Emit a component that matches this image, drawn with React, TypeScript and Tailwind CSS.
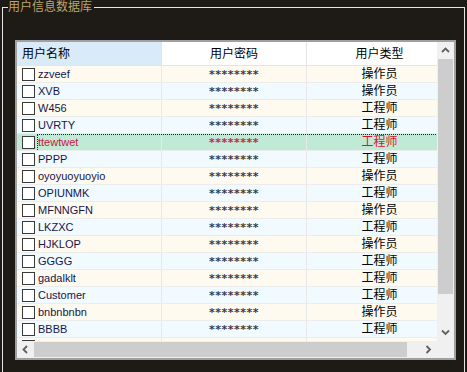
import React from "react";

interface UserRow {
  name: string;
  type: string;
}

const users: UserRow[] = [
  { name: "zzveef", type: "操作员" },
  { name: "XVB", type: "操作员" },
  { name: "W456", type: "工程师" },
  { name: "UVRTY", type: "工程师" },
  { name: "ttewtwet", type: "工程师" },
  { name: "PPPP", type: "工程师" },
  { name: "oyoyuoyuoyio", type: "操作员" },
  { name: "OPIUNMK", type: "工程师" },
  { name: "MFNNGFN", type: "操作员" },
  { name: "LKZXC", type: "工程师" },
  { name: "HJKLOP", type: "操作员" },
  { name: "GGGG", type: "工程师" },
  { name: "gadalklt", type: "工程师" },
  { name: "Customer", type: "工程师" },
  { name: "bnbnbnbn", type: "操作员" },
  { name: "BBBB", type: "工程师" },
  { name: "", type: "" },
];

const SELECTED = 4;

function Arrow({ dir }: { dir: "up" | "down" | "left" | "right" }) {
  // 滚动条上的小箭头
  const pts = {
    up: "1,6 4.5,2.5 8,6",
    down: "1,2.5 4.5,6 8,2.5",
    left: "6,1 2.5,4.5 6,8",
    right: "2.5,1 6,4.5 2.5,8",
  }[dir];
  return (
    <svg width="9" height="9" viewBox="0 0 9 9">
      <polyline points={pts} fill="none" stroke="#606060" strokeWidth="1.8" />
    </svg>
  );
}

export default function App() {
  return (
    <div
      className="h-[372px] w-[467px] overflow-hidden bg-[#1e1a16] px-[2px]"
      style={{ fontFamily: '"Liberation Sans", "Noto Sans CJK SC", sans-serif' }}
    >
      <fieldset className="h-[420px] border border-[#e6e6e6] pl-[5px]">
        <legend className="px-0 pr-[2px] text-[12px] leading-[14px] text-[#bba66c]">用户信息数据库</legend>

        {/* 数据表格 */}
        <div className="ml-[7px] mt-[26px] flex h-[320px] w-[441px] flex-col border-2 border-[#a0a0a0] bg-white">
          <div className="flex h-[299px]">
            <div className="flex-1 overflow-hidden">
              <div className="w-[435px]">
                {/* 表头 */}
                <div className="flex h-[24px] border-b border-[#e4e4e4] text-[12px] text-black">
                  <div className="flex w-[145px] items-center border-r border-[#e4e4e4] bg-[#d9eaf8] pl-[5px]">用户名称</div>
                  <div className="flex w-[145px] items-center justify-center border-r border-[#e4e4e4]">用户密码</div>
                  <div className="flex w-[145px] items-center justify-center">用户类型</div>
                </div>

                {users.map((u, i) => {
                  const selected = i === SELECTED;
                  const bg = selected ? "bg-[#c1ead6]" : i % 2 === 0 ? "bg-[#fffaf0]" : "bg-[#f0faff]";
                  return (
                    <div key={i} className={`relative flex h-[17px] border-b border-[#ececec] ${bg}`}>
                      <div className="flex w-[145px] items-center border-r border-[#e8e8e8] pl-[5px]">
                        <span className="h-[13px] w-[13px] border border-[#3a3a3a] bg-white" />
                        <span
                          className={`ml-[3px] text-[11px] ${selected ? "text-[#c8143c]" : "text-[#16164a]"}`}
                        >
                          {u.name}
                        </span>
                      </div>
                      <div
                        className={`flex w-[145px] items-center justify-center border-r border-[#e8e8e8] pt-[3px] text-[11px] font-bold tracking-[0.5px] ${
                          selected ? "text-[#c02848]" : "text-[#3a3c4a]"
                        }`}
                        style={{ fontFamily: '"DejaVu Sans", sans-serif' }}
                      >
                        {u.name ? "********" : ""}
                      </div>
                      <div
                        className={`flex w-[145px] items-center justify-center text-[12px] ${
                          selected ? "text-[#e0102e]" : "text-black"
                        }`}
                      >
                        {u.type}
                      </div>
                      {selected && (
                        <div className="pointer-events-none absolute bottom-0 left-[20px] right-0 top-0 border-l border-t border-dotted border-[#202020]" />
                      )}
                    </div>
                  );
                })}
              </div>
            </div>

            {/* 垂直滚动条 */}
            <div className="flex w-[17px] flex-col bg-[#f0f0f0]">
              <div className="flex h-[17px] items-center justify-center">
                <Arrow dir="up" />
              </div>
              <div className="mx-[1px] h-[235px] bg-[#cdcdcd]" />
              <div className="flex-1" />
              <div className="flex h-[17px] items-center justify-center">
                <Arrow dir="down" />
              </div>
            </div>
          </div>

          {/* 水平滚动条 */}
          <div className="flex h-[17px]">
            <div className="flex flex-1 items-center bg-[#f0f0f0]">
              <div className="flex h-[17px] w-[17px] items-center justify-center">
                <Arrow dir="left" />
              </div>
              <div className="my-[1px] h-[15px] w-[373px] bg-[#cdcdcd]" />
              <div className="flex-1" />
              <div className="flex h-[17px] w-[17px] items-center justify-center">
                <Arrow dir="right" />
              </div>
            </div>
            <div className="w-[17px] bg-[#f0f0f0]" />
          </div>
        </div>
      </fieldset>
    </div>
  );
}
